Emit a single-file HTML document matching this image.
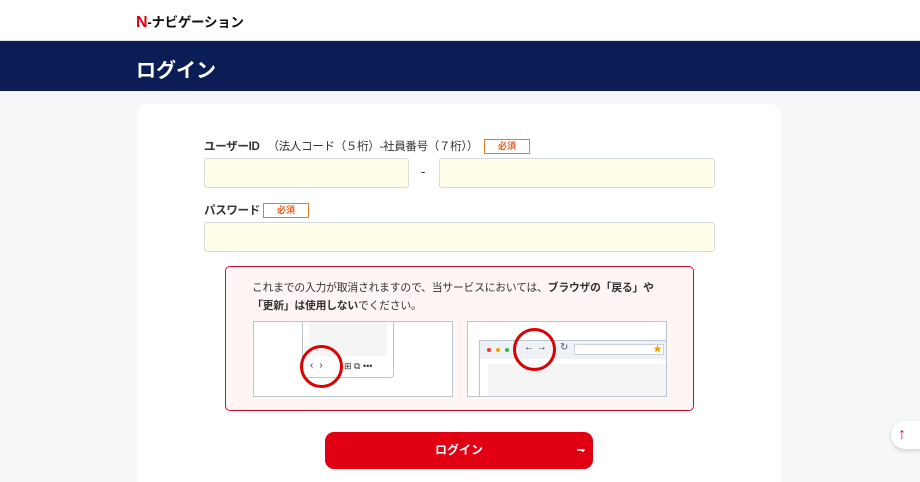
<!DOCTYPE html>
<html><head><meta charset="utf-8"><style>
*{margin:0;padding:0;box-sizing:border-box}
html,body{width:920px;height:482px;overflow:hidden}
body{background:#f6f7f8;font-family:"Liberation Sans","Noto Sans CJK JP",sans-serif;color:#222;position:relative}
.hd{height:41px;background:#fff;position:relative;border-bottom:1px solid #dde3ea}
.logo{position:absolute;left:136px;top:11px;font-size:13.5px;font-weight:bold;color:#111;letter-spacing:-0.3px}
.logo b{color:#e00012;font-size:16px}
.bar{height:50px;background:#0b1d55;color:#fff;font-weight:bold;font-size:20px;padding:13px 0 0 136px}
.card{position:absolute;left:137px;top:104px;width:644px;height:390px;background:#fff;border-radius:12px}
.lbl{position:absolute;font-size:11.5px;font-weight:bold;color:#333;letter-spacing:-0.3px}
.lbl span{font-weight:normal;margin-left:8px}
.req{position:absolute;width:46px;height:15px;border:1px solid #f07a20;color:#e8601a;font-size:9px;font-weight:bold;text-align:center;line-height:13px;background:#fff}
.in{position:absolute;height:30px;background:#fdfde8;border:1px solid #d6dbe0;border-radius:3px}
.note{position:absolute;left:88px;top:162px;width:469px;height:145px;border:1.5px solid #c8102e;border-radius:5px;background:#fff5f5}
.nt{position:absolute;left:26px;top:12px;font-size:10.8px;line-height:18px;color:#333;letter-spacing:-0.2px}
.img{position:absolute;top:54px;width:200px;height:76px;background:#fff;border:1px solid #b9c7d3;overflow:hidden}
.btn{position:absolute;left:188px;top:328px;width:268px;height:37px;background:#e00012;border-radius:9px;color:#fff;font-weight:bold;font-size:12px;text-align:center;line-height:37px}
.top{position:absolute;left:891px;top:421px;width:40px;height:28px;background:#fff;border-radius:14px;box-shadow:0 2px 5px rgba(0,0,0,.15);color:#c8102e;font-size:16px;padding-left:7px;line-height:28px}
</style></head><body>
<div class="hd"><div class="logo"><b>N</b>-ナビゲーション</div></div>
<div class="bar">ログイン</div>
<div class="card">
<div class="lbl" style="left:67px;top:34px">ユーザーID<span>（法人コード（５桁）-社員番号（７桁））</span></div>
<div class="req" style="left:347px;top:35px">必須</div>
<div class="in" style="left:67px;top:54px;width:205px"></div>
<div style="position:absolute;left:284px;top:60px;font-size:13px">-</div>
<div class="in" style="left:302px;top:54px;width:276px"></div>
<div class="lbl" style="left:67px;top:98px">パスワード</div>
<div class="req" style="left:126px;top:99px">必須</div>
<div class="in" style="left:67px;top:118px;width:511px"></div>
<div class="note">
<div class="nt">これまでの入力が取消されますので、当サービスにおいては、<b>ブラウザの「戻る」や<br>「更新」は使用しない</b>でください。</div>
<div class="img" style="left:27px">
<div style="position:absolute;left:48px;top:-2px;width:92px;height:58px;border:1px solid #b9c7d3;border-top:none;border-radius:0 0 4px 4px;background:#fff"></div>
<div style="position:absolute;left:55px;top:0;width:78px;height:34px;background:#f5f5f5;border-radius:3px"></div>
<div style="position:absolute;left:56px;top:38px;font-size:10px;color:#333;letter-spacing:6px">‹›</div>
<div style="position:absolute;left:90px;top:39px;font-size:9px;color:#333">⊞ ⧉ •••</div>
<div style="position:absolute;left:46px;top:23px;width:43px;height:43px;border:3px solid #d00;border-radius:50%"></div>
</div>
<div class="img" style="left:241px">
<div style="position:absolute;left:11px;top:18px;width:200px;height:70px;border:1px solid #b9c7d3;background:#fff"></div>
<div style="position:absolute;left:12px;top:19px;width:200px;height:18px;background:#eef2f6"></div>
<div style="position:absolute;left:19px;top:26px;width:4px;height:4px;border-radius:50%;background:#e33"></div>
<div style="position:absolute;left:28px;top:26px;width:4px;height:4px;border-radius:50%;background:#f90"></div>
<div style="position:absolute;left:37px;top:26px;width:4px;height:4px;border-radius:50%;background:#3b3"></div>
<div style="position:absolute;left:56px;top:20px;font-size:10px;color:#333">← →</div>
<div style="position:absolute;left:92px;top:20px;font-size:10px;color:#555">↻</div>
<div style="position:absolute;left:106px;top:22px;width:90px;height:11px;background:#fff;border:1px solid #c9d2da"></div>
<div style="position:absolute;left:185px;top:20px;font-size:9px;color:#f90">★</div>
<div style="position:absolute;left:20px;top:42px;width:180px;height:40px;background:#f5f5f5"></div>
<div style="position:absolute;left:45px;top:6px;width:43px;height:43px;border:3px solid #d00;border-radius:50%"></div>
</div>
</div>
<div class="btn">ログイン<span style="position:absolute;right:8px;font-size:10px">⇁</span></div>
</div>
<div class="top">↑</div>
</body></html>
